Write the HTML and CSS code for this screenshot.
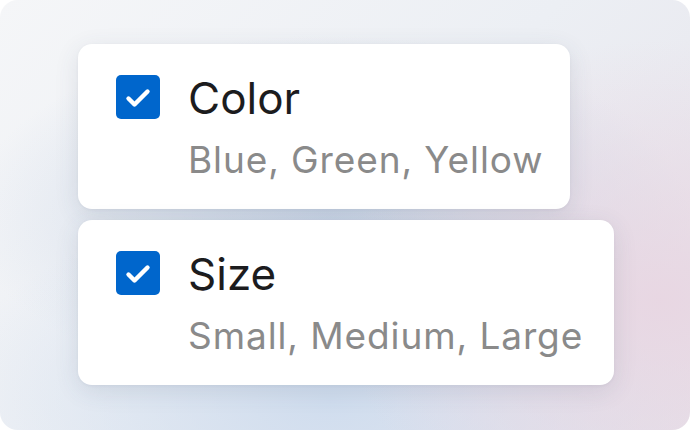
FILE: index.html
```html
<!DOCTYPE html>
<html>
<head>
<meta charset="utf-8">
<link rel="stylesheet" href="styles.css">
</head>
<body>
<div class="panel">
  <div class="card card-color">
    <span class="check"><svg viewBox="0 0 44 44" width="44" height="44"><path d="M12.5 23.5 L18.5 29.5 L31.5 16.5" fill="none" stroke="#fff" stroke-width="4.4" stroke-linecap="round" stroke-linejoin="round"/></svg></span>
    <div class="text">
      <div class="title">Color</div>
      <div class="sub">Blue, Green, Yellow</div>
    </div>
  </div>
  <div class="card card-size">
    <span class="check"><svg viewBox="0 0 44 44" width="44" height="44"><path d="M12.5 23.5 L18.5 29.5 L31.5 16.5" fill="none" stroke="#fff" stroke-width="4.4" stroke-linecap="round" stroke-linejoin="round"/></svg></span>
    <div class="text">
      <div class="title">Size</div>
      <div class="sub">Small, Medium, Large</div>
    </div>
  </div>
</div>
</body>
</html>
```
FILE: styles.css
```css
html, body {
  margin: 0;
  padding: 0;
  background: #ffffff;
}
body {
  width: 690px;
  height: 430px;
  overflow: hidden;
  font-family: Inter, "Liberation Sans", sans-serif;
}
.panel {
  width: 690px;
  height: 430px;
  box-sizing: border-box;
  border-radius: 18px;
  padding: 44px 0 0 78px;
  display: flex;
  flex-direction: column;
  align-items: flex-start;
  gap: 11px;
  background:
    radial-gradient(ellipse 320px 260px at 660px 300px, rgba(232, 214, 226, 0.95), rgba(232, 214, 226, 0) 100%),
    radial-gradient(ellipse 380px 200px at 330px 400px, rgba(206, 220, 238, 0.95), rgba(206, 220, 238, 0) 100%),
    radial-gradient(ellipse 360px 180px at 330px 215px, rgba(200, 212, 230, 0.9), rgba(200, 212, 230, 0) 100%),
    linear-gradient(135deg, #f5f6f8 0%, #eceff4 50%, #e6e2ea 100%);
}
.card {
  background: #ffffff;
  border-radius: 14px;
  height: 165px;
  box-sizing: border-box;
  padding: 31px 0 0 38px;
  display: flex;
  gap: 28px;
  box-shadow: 0 6px 24px rgba(60, 70, 100, 0.12), 0 1px 3px rgba(60, 70, 100, 0.06);
}
.card-color { width: 492px; }
.card-size { width: 536px; }
.check {
  width: 44px;
  height: 44px;
  border-radius: 5px;
  background: #0066cc;
  flex: none;
  display: block;
}
.check svg { display: block; }
.text {
  display: flex;
  flex-direction: column;
}
.title {
  font-size: 44px;
  line-height: 44px;
  color: #1c1c1e;
  margin-top: 1px;
}
.sub {
  font-size: 37px;
  line-height: 37px;
  letter-spacing: 0.9px;
  color: #8a8a8a;
  margin-top: 21px;
}
```
